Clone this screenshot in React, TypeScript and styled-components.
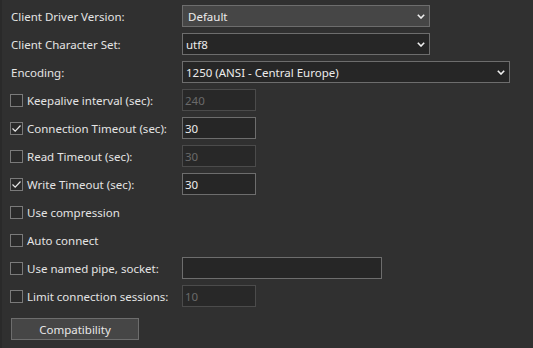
import React from 'react';
import styled, { createGlobalStyle } from 'styled-components';

const GlobalStyle = createGlobalStyle`
  html, body {
    margin: 0;
    padding: 0;
    background: #303030;
  }
  body {
    font-family: "Noto Sans", "Open Sans", sans-serif;
    font-size: 11.5px;
    color: #e6e6e6;
  }
`;

const Panel = styled.div`
  width: 533px;
  height: 348px;
  box-sizing: border-box;
  padding: 5px 0 0 8px;
  border-left: 2px solid #2a2a2a;
  display: flex;
  flex-direction: column;
  gap: 6px;
`;

const Row = styled.div`
  display: grid;
  grid-template-columns: 172px auto;
  align-items: center;
  height: 22px;
`;

const Label = styled.label<{ $indent?: boolean }>`
  display: flex;
  align-items: center;
  gap: 4px;
  padding-left: ${(p) => (p.$indent ? '1px' : '0')};
  white-space: nowrap;
  color: #e4e4e4;
`;

const Box = styled.span<{ $checked?: boolean }>`
  width: 11px;
  height: 11px;
  border: 1px solid #7a7a7a;
  background: #2a2a2a;
  display: inline-flex;
  align-items: center;
  justify-content: center;
  flex: none;
`;

const Select = styled.div<{ $w: number; $raised?: boolean }>`
  box-sizing: border-box;
  width: ${(p) => p.$w}px;
  height: 22px;
  border: 1px solid #6d6d6d;
  background: ${(p) => (p.$raised ? '#464646' : '#262626')};
  display: flex;
  align-items: center;
  justify-content: space-between;
  padding: 0 4px 0 ${(p) => (p.$raised ? '5px' : '3px')};
  color: #ececec;
`;

const TextBox = styled.input<{ $w: number }>`
  box-sizing: border-box;
  width: ${(p) => p.$w}px;
  height: 22px;
  margin: 0;
  border: 1px solid #6d6d6d;
  background: #262626;
  color: #ececec;
  font: inherit;
  padding: 0 2px;
  outline: none;

  &:disabled {
    border-color: #4b4b4b;
    background: #282828;
    color: #6a6a6a;
  }
`;

const Button = styled.button`
  box-sizing: border-box;
  width: 128px;
  height: 22px;
  margin: 5px 0 0 1px;
  border: 1px solid #6d6d6d;
  background: #464646;
  color: #e8e8e8;
  font: inherit;
  padding: 0;
`;

const Chevron = () => (
  <svg width="8" height="5" viewBox="0 0 8 5">
    <path d="M0.8 0.8 L4 4 L7.2 0.8" fill="none" stroke="#f0f0f0" strokeWidth="1.6" />
  </svg>
);

const Check = () => (
  <svg width="11" height="11" viewBox="0 0 11 11">
    <path d="M1.5 5.5 L4.2 8.2 L9.5 2.5" fill="none" stroke="#e8e8e8" strokeWidth="1.2" />
  </svg>
);

const CheckLabel: React.FC<{ checked?: boolean; text: string }> = ({ checked, text }) => (
  <Label>
    <Box $checked={checked}>{checked && <Check />}</Box>
    {text}
  </Label>
);

const App: React.FC = () => (
  <>
    <GlobalStyle />
    <Panel>
      <Row>
        <Label $indent>Client Driver Version:</Label>
        <Select $w={248} $raised>
          Default <Chevron />
        </Select>
      </Row>
      <Row>
        <Label $indent>Client Character Set:</Label>
        <Select $w={248}>
          utf8 <Chevron />
        </Select>
      </Row>
      <Row>
        <Label $indent>Encoding:</Label>
        <Select $w={328}>
          1250 (ANSI - Central Europe) <Chevron />
        </Select>
      </Row>
      <Row>
        <CheckLabel text="Keepalive interval (sec):" />
        <TextBox $w={74} value="240" disabled readOnly />
      </Row>
      <Row>
        <CheckLabel checked text="Connection Timeout (sec):" />
        <TextBox $w={74} value="30" readOnly />
      </Row>
      <Row>
        <CheckLabel text="Read Timeout (sec):" />
        <TextBox $w={74} value="30" disabled readOnly />
      </Row>
      <Row>
        <CheckLabel checked text="Write Timeout (sec):" />
        <TextBox $w={74} value="30" readOnly />
      </Row>
      <Row>
        <CheckLabel text="Use compression" />
      </Row>
      <Row>
        <CheckLabel text="Auto connect" />
      </Row>
      <Row>
        <CheckLabel text="Use named pipe, socket:" />
        <TextBox $w={200} value="" readOnly />
      </Row>
      <Row>
        <CheckLabel text="Limit connection sessions:" />
        <TextBox $w={74} value="10" disabled readOnly />
      </Row>
      <div>
        <Button>Compatibility</Button>
      </div>
    </Panel>
  </>
);

export default App;
